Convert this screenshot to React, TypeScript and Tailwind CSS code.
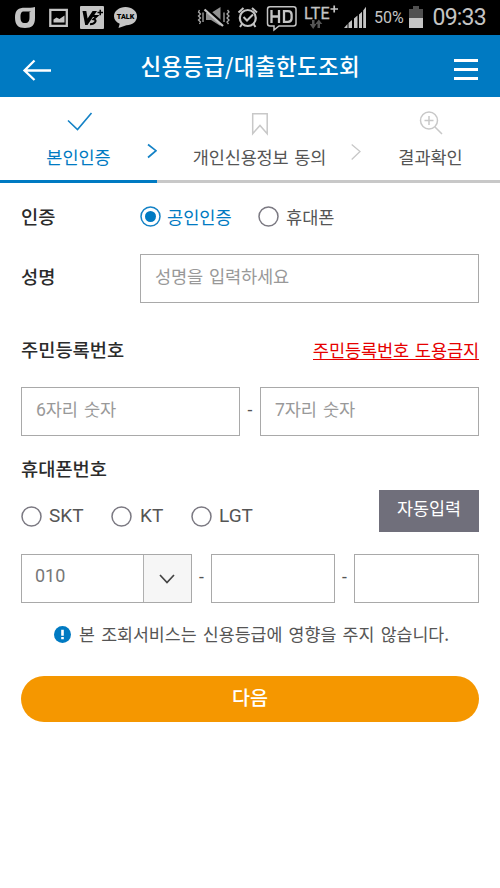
import React from "react";

const KR = "font-['Noto_Sans_CJK_KR',sans-serif]";
const RB = "font-[Roboto,'Noto_Sans_CJK_KR',sans-serif]";

function StatusBar() {
  return (
    <div className="flex h-[35px] w-full shrink-0 items-start bg-black font-[Roboto,sans-serif] text-[#c4c4c4]">
      <svg className="block shrink-0" width="374" height="35" viewBox="0 0 374 35" fill="none">
        <path d="M35 7v5h-4.500v-.5H24c-2.800 0-3.500 2-3.500 5.500 0 4 1 6 4.500 6s4.500-2 4.500-6v-5H35v6c0 7-3 10-10 10s-10-3-10-10.500S18.500 7.800 25 7.800C29 7.800 32 7.700 35 7Z" fill="#c4c4c4" />
        <path d="M50.300 9.800h16.500v16H50.300z" stroke="#c4c4c4" strokeWidth="2.300" />
        <path d="M53.500 22.500v-3l3-2 3 1.500 5-3.500v7z" fill="#c4c4c4" />
        <rect x="80" y="6" width="24" height="23" rx="1" fill="#c4c4c4" />
        <path d="M82.500 11h3.800l1.300 7.500 5-7.500h4.400L87.500 25h-2.300z" fill="#000" />
        <path d="M92 16h5l-3.400 3.200c3.800.4 2 5-3.600 5" stroke="#000" strokeWidth="2" />
        <path d="M97.500 12.500h5.500M100.200 9.800v5.500" stroke="#000" strokeWidth="1.500" />
        <path d="M125.500 7c6.300 0 11.500 4 11.500 9.200s-4.600 9-10.600 9L118.500 28l1.200-4.200c-3.300-1.600-5.700-4.200-5.700-7.600C114 11 119.200 7 125.500 7Z" fill="#c4c4c4" />
        <text x="116.800" y="18.800" fontSize="7.200" fontWeight="900" fill="#000" textLength="17.500" lengthAdjust="spacingAndGlyphs">TALK</text>
        <path d="M199.500 10l-1 2 2 2-2 2 2 2-2 2 2 2-1 2M203 12.500v9.500M227.500 10l1.500 2-2 2 2 2-2 2 2 2-2 2 1.500 2M224 12.500v9.500" stroke="#a8a8a8" strokeWidth="1.300" />
        <path d="M206 13h5l9.500-6v19l-9.500-6h-5z" fill="#909090" />
        <path d="M206 8.500l18 16" stroke="#000" strokeWidth="3" />
        <path d="M204.500 9.500l18.500 16.500" stroke="#c4c4c4" strokeWidth="2.300" />
        <circle cx="247.800" cy="18" r="8" stroke="#c4c4c4" strokeWidth="2.200" />
        <path d="M238.500 12.500l5-4.500M257 12.500L252 8M242 24l-2 3M253.500 24l2 3" stroke="#c4c4c4" strokeWidth="2" />
        <path d="M243.500 17l3.500 3.500 6-6" stroke="#c4c4c4" strokeWidth="2" />
        <path d="M270 6.700h23.500q2.500 0 2.500 2.500v14.300q0 2.500-2.500 2.500H279l-5 4V26h-4q-2.500 0-2.500-2.500V9.200q0-2.500 2.500-2.500Z" stroke="#c4c4c4" strokeWidth="1.500" />
        <path d="M271.500 10v13M271.500 16.500h7M279 10v13M284 11.200h4q3.600 0 3.600 3.600v3.500q0 3.600-3.600 3.600h-4z" stroke="#c4c4c4" strokeWidth="2.300" />
        <text x="304" y="18.500" fontSize="16" fontWeight="400" fill="#c4c4c4" stroke="#c4c4c4" strokeWidth=".3" textLength="25.500">LTE</text>
        <path d="M330.500 9h7.500M334.200 5.500v7" stroke="#c4c4c4" strokeWidth="1.700" />
        <path d="M312 20h2.500v4h2l-3.300 5-3.500-5h2.300zM317.500 28h2.500v-4h2.300l-3.500-4.500-3.400 4.500h2.100z" fill="#555" />
        <path d="M344 28h3.500v-4zM348.500 28v-5l3.500-3V28zM354 28v-9.500l3.500-3V28zM359 28V14.500l3-2.700V28zM363.200 28V10.500l2.800-3.700V28z" fill="#c4c4c4" />
      </svg>
      <span className="mt-[8px] block w-[35px] text-[16px] leading-[20px]">50%</span>
      <svg className="block shrink-0" width="15" height="35" viewBox="0 0 15 35">
        <path d="M4 6h6v3h4v10H0V9h4z" fill="#505050" />
        <path d="M0 18h14v10H0z" fill="#c4c4c4" />
      </svg>
      <span className="ml-[8.500px] mt-[5px] block whitespace-nowrap text-[23px] leading-[26px] tracking-[-0.800px]">09:33</span>
    </div>
  );
}

function Header() {
  return (
    <header className="flex h-[62px] shrink-0 items-start bg-[#007ac2] text-white">
      <svg className="ml-[22px] mt-[24px] block" width="30" height="22" viewBox="0 0 30 22" fill="none" stroke="#fff" strokeWidth="2.300">
        <path d="M29 11.500H2M12.500 1.500l-10 10 10 9.500" />
      </svg>
      <h1 className={`${KR} ml-[88.500px] mt-[14px] w-[220px] whitespace-nowrap text-[22.500px] font-medium leading-[32px] tracking-[0.350px]`}>신용등급/대출한도조회</h1>
      <div className="ml-[93px] mt-[24px] flex w-[24.500px] flex-col gap-[6px]">
        <i className="block h-[3px] bg-white" />
        <i className="block h-[3px] bg-white" />
        <i className="block h-[3px] bg-white" />
      </div>
    </header>
  );
}

function Steps() {
  return (
    <div className={`${KR} shrink-0 text-[17.500px] leading-[24px] text-[#555]`}>
      <div className="flex h-[83px] items-start whitespace-nowrap">
        <div className="ml-[46px] flex w-[65px] flex-col items-center text-[#007ac2]">
          <svg className="mt-[11px] block h-[27px]" width="28" height="27" viewBox="0 0 28 27" fill="none" stroke="#1482c6" strokeWidth="1.600">
            <path d="M3 12.500l9.500 9L26.500 5" />
          </svg>
          <span className="mt-[10px]">본인인증</span>
        </div>
        <svg className="ml-[36px] mt-[46px] block" width="10" height="16" viewBox="0 0 10 16" fill="none" stroke="#1482c6" strokeWidth="1.700">
          <path d="M1 1.500l8 6.200-8 6.800" />
        </svg>
        <div className="ml-[35px] flex w-[135px] flex-col items-center">
          <svg className="mt-[15px] block h-[24px]" width="18" height="24" viewBox="0 0 18 24" fill="none" stroke="#c8c8c8" strokeWidth="1.500">
            <path d="M1.700 1.700h14.500v20L9 13.500l-7.300 8.200z" />
          </svg>
          <span className="mt-[9px] tracking-[-0.150px] [word-spacing:2px]">개인신용정보 동의</span>
        </div>
        <svg className="ml-[24px] mt-[46px] block" width="10" height="18" viewBox="0 0 10 18" fill="none" stroke="#c8c8c8" strokeWidth="1.300">
          <path d="M.7 1.500L9 8.500.7 16.500" />
        </svg>
        <div className="ml-[37px] flex w-[65px] flex-col items-center">
          <svg className="mt-[13px] block h-[26px]" width="24" height="26" viewBox="0 0 24 26" fill="none" stroke="#c8c8c8" strokeWidth="1.500">
            <circle cx="10" cy="10.500" r="8.500" />
            <path d="M10 6v9M5.500 10.500h9M16 17l7 7" />
          </svg>
          <span className="mt-[9px]">결과확인</span>
        </div>
      </div>
      <div className="flex h-[3px]">
        <div className="w-[157px] bg-[#007ac2]" />
        <div className="flex-1 bg-[#c8c8c8]" />
      </div>
    </div>
  );
}

function Radio({ on = false }: { on?: boolean }) {
  return (
    <svg className="block shrink-0" width="21" height="21" viewBox="0 0 21 21" fill="none">
      <circle cx="10.500" cy="10.500" r="9.500" stroke={on ? "#1482c6" : "#7b7982"} strokeWidth="1.500" />
      {on && <circle cx="10.500" cy="10.500" r="5.500" fill="#007ac2" />}
    </svg>
  );
}

const box = "h-[49px] shrink-0 border border-[#a9a9a9] bg-white text-[#999]";
const label = "text-[18.700px] font-medium leading-[26px] text-[#2b2b2b]";
const spaced = "tracking-[-0.150px] [word-spacing:2px]";

export default function App() {
  return (
    <div className={`${KR} flex h-[888px] w-[500px] flex-col overflow-hidden bg-white text-[17.600px] text-[#555]`}>
      <StatusBar />
      <Header />
      <Steps />
      <main className="flex flex-col whitespace-nowrap pl-[21px] pr-[21px]">
        <div className="mt-[20px] flex h-[26px] items-center">
          <span className={`${label} w-[119px]`}>인증</span>
          <Radio on />
          <span className="ml-[6px] w-[91px] pt-[2px] text-[#007ac2]">공인인증</span>
          <Radio />
          <span className="ml-[7px] pt-[2px]">휴대폰</span>
        </div>
        <div className="mt-[25px] flex h-[49px]">
          <span className={`${label} mt-[9px] w-[119px]`}>성명</span>
          <div className={`${box} ${spaced} w-[339px] pl-[14px] pt-[8px] leading-[26px]`}>성명을 입력하세요</div>
        </div>
        <div className="mt-[33px] flex h-[26px] items-center justify-between">
          <span className={label}>주민등록번호</span>
          <span className="h-[22px] border-b-[1.500px] border-[#e60000] leading-[26px] text-[#e60000]">
            <span className={`${spaced} -mt-px block`}>주민등록번호 도용금지</span>
          </span>
        </div>
        <div className={`${RB} mt-[25px] flex h-[49px]`}>
          <div className={`${box} ${spaced} w-[219px] pl-[14px] pt-[9px] leading-[26px]`}>6자리 숫자</div>
          <span className="w-[20px] pt-[10px] text-center leading-[26px]">-</span>
          <div className={`${box} ${spaced} w-[219px] pl-[14px] pt-[9px] leading-[26px]`}>7자리 숫자</div>
        </div>
        <div className="mt-[20px] flex h-[76px] justify-between">
          <div>
            <div className={`${label} -mt-px`}>휴대폰번호</div>
            <div className={`${RB} mt-[24px] flex h-[22px] items-center text-[19px] leading-[22px]`}>
              <Radio />
              <span className="ml-[7px] w-[62px] pb-px">SKT</span>
              <Radio />
              <span className="ml-[8px] w-[51px] pb-px">KT</span>
              <Radio />
              <span className="ml-[7px] pb-px">LGT</span>
            </div>
          </div>
          <div className="mt-[34px] h-[42px] w-[100px] bg-[#706f7b] pt-[5px] text-center text-[17.400px] leading-[26px] text-white">자동입력</div>
        </div>
        <div className={`${RB} mt-[22px] flex h-[49px]`}>
          <div className={`${box} flex w-[171px]`}>
            <span className="w-[121px] pl-[13px] pt-[8px] text-[18px] leading-[26px] text-[#777]">010</span>
            <div className="flex flex-1 items-center justify-center border-l border-[#b0b0b0] bg-[#f6f6f6]">
              <svg className="mr-px" width="16" height="10" viewBox="0 0 16 10" fill="none" stroke="#444" strokeWidth="1.700">
                <path d="M1 1l7 7.500L15 1" />
              </svg>
            </div>
          </div>
          <span className="w-[19px] pt-[10px] text-center leading-[26px]">-</span>
          <div className={`${box} w-[124px]`} />
          <span className="w-[19px] pt-[10px] text-center leading-[26px]">-</span>
          <div className={`${box} w-[125px]`} />
        </div>
        <div className="mt-[18px] flex h-[26px] items-center pl-[33px]">
          <svg className="block shrink-0" width="17" height="17" viewBox="0 0 17 17">
            <circle cx="8.500" cy="8.500" r="8.500" fill="#007ac2" />
            <path d="M7.200 3.800h2.600v6H7.200zM7.200 11h2.600v2.200H7.200z" fill="#fff" />
          </svg>
          <span className="ml-[8px] text-[17.300px] leading-[26px] [word-spacing:2.400px]">본 조회서비스는 신용등급에 영향을 주지 않습니다.</span>
        </div>
        <div className="mt-[29px] h-[46px] rounded-full bg-[#f59700] pt-[7px] text-center text-[19.600px] font-medium leading-[28px] text-white">다음</div>
      </main>
    </div>
  );
}
